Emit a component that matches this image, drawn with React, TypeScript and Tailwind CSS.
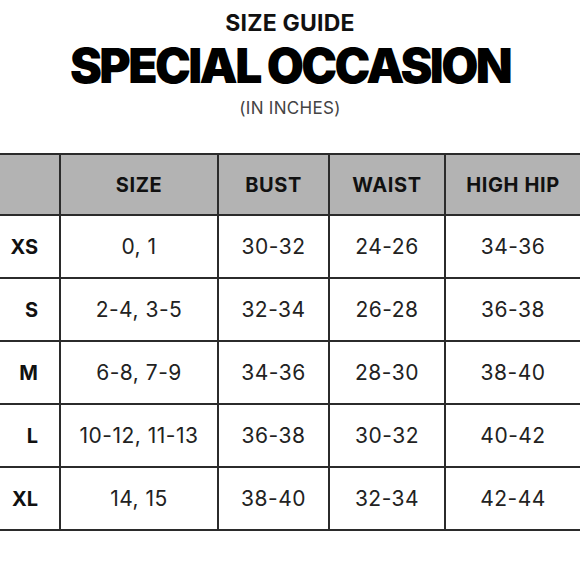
import React from "react";

const rows = [
  { label: "XS", size: "0, 1", bust: "30-32", waist: "24-26", hip: "34-36" },
  { label: "S", size: "2-4, 3-5", bust: "32-34", waist: "26-28", hip: "36-38" },
  { label: "M", size: "6-8, 7-9", bust: "34-36", waist: "28-30", hip: "38-40" },
  { label: "L", size: "10-12, 11-13", bust: "36-38", waist: "30-32", hip: "40-42" },
  { label: "XL", size: "14, 15", bust: "38-40", waist: "32-34", hip: "42-44" },
];

const headers = ["SIZE", "BUST", "WAIST", "HIGH HIP"];

export default function App() {
  return (
    <div
      className="w-[580px] h-[580px] bg-white overflow-hidden text-[#1a1a1a]"
      style={{ fontFamily: "Inter, 'Noto Sans', sans-serif" }}
    >
      {/* Title */}
      <div className="flex flex-col items-center pt-[8px]">
        <div className="text-[23px] leading-[30px] font-bold tracking-[0.2px] text-[#111]">SIZE GUIDE</div>
        <div className="text-[48px] leading-[50px] font-black tracking-[-2.6px] text-black mt-[3px]">
          SPECIAL OCCASION
        </div>
        <div className="text-[17px] leading-[22px] text-[#444] mt-[6px] tracking-[0.3px]">(IN INCHES)</div>
      </div>

      {/* Table */}
      <div className="mt-[34px] grid grid-cols-[59px_158px_111px_116px_136px] border-t-2 border-[#2b2b2b]">
        <div className="h-[61px] bg-[#b3b3b3] border-b-2 border-[#2b2b2b]" />
        {headers.map((h) => (
          <div
            key={h}
            className="h-[61px] bg-[#b3b3b3] border-b-2 border-l-2 border-[#2b2b2b] flex items-center justify-center text-[20px] font-bold text-[#111] tracking-[0.6px]"
          >
            {h}
          </div>
        ))}
        {rows.map((r) => (
          <React.Fragment key={r.label}>
            <div className="h-[63px] border-b-2 border-[#2b2b2b] flex items-center justify-end pr-[21px] text-[20px] font-bold text-[#111]">
              {r.label}
            </div>
            {[r.size, r.bust, r.waist, r.hip].map((v, i) => (
              <div
                key={i}
                className="h-[63px] border-b-2 border-l-2 border-[#2b2b2b] flex items-center justify-center text-[21px] text-[#222] tracking-[0.5px]"
              >
                {v}
              </div>
            ))}
          </React.Fragment>
        ))}
      </div>
    </div>
  );
}
